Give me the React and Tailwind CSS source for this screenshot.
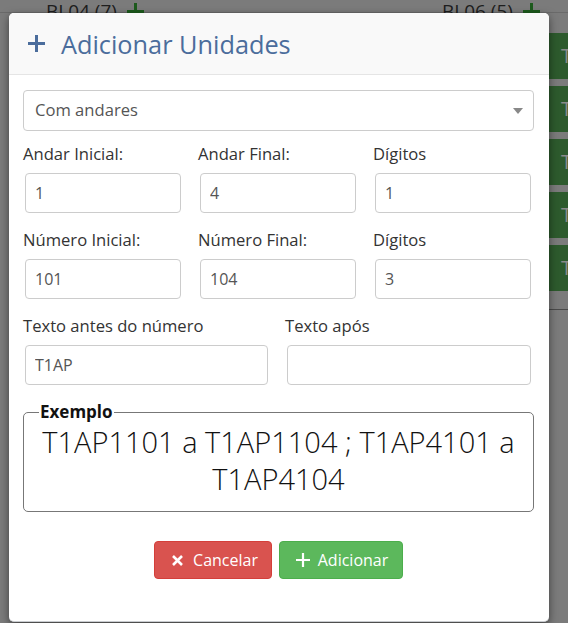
import React from "react";

const font = { fontFamily: '"Open Sans", "Noto Sans", sans-serif' };

function Field({ label, value, inputClass }) {
  return (
    <div className="flex flex-col">
      <label className="text-[16.6px] leading-[22px] text-[#333] h-[22px] whitespace-nowrap">{label}</label>
      <input
        readOnly
        value={value}
        className={`mt-[8px] ml-[2px] h-[40px] rounded-[4px] border border-[#ccc] bg-white pl-[9px] text-[16px] text-[#555] outline-none ${inputClass}`}
      />
    </div>
  );
}

export default function App() {
  return (
    <div className="relative w-[568px] h-[623px] overflow-hidden bg-[#7b7b7b]" style={font}>
      {/* page behind overlay */}
      <div className="flex flex-col">
        <div className="h-[13px] flex items-end border-b border-[#6a6a6a]">
          <div className="flex w-full">
            <div className="ml-[46px] flex items-center gap-[10px] -mb-[10px]">
              <span className="text-[19px] leading-[22px] text-[#1e1e1e]">BL04 (7)</span>
              <svg width="17" height="17" viewBox="0 0 17 17">
                <path d="M8.5 0v17M0 8.5h17" stroke="#1d5a1d" strokeWidth="3" />
              </svg>
            </div>
            <div className="ml-[298px] flex items-center gap-[10px] -mb-[10px]">
              <span className="text-[19px] leading-[22px] text-[#1e1e1e]">BL06 (5)</span>
              <svg width="17" height="17" viewBox="0 0 17 17">
                <path d="M8.5 0v17M0 8.5h17" stroke="#1d5a1d" strokeWidth="3" />
              </svg>
            </div>
          </div>
        </div>
        <div className="ml-[549px] mt-[20px] flex flex-col gap-[7px] w-[40px]">
          {[0, 1, 2, 3, 4].map((i) => (
            <div key={i} className="h-[46px] bg-[#2d5a2d] flex items-center pl-[12px] text-[20px] text-[#8a8a8a]">
              T
            </div>
          ))}
          <div className="h-[12px] border-b border-[#4a4a4a]" />
        </div>
      </div>

      {/* modal */}
      <div className="absolute left-[9px] top-[13px] w-[540px] h-[609px] bg-white rounded-[5px] border-b border-[#c9ccd0] shadow-[0_3px_9px_rgba(0,0,0,0.5)] flex flex-col">
        <div className="h-[62px] bg-[#f9f9f9] border-b border-[#e5e5e5] rounded-t-[5px] flex items-center pl-[19px] gap-[16px]">
          <svg width="17" height="17" viewBox="0 0 17 17">
            <path d="M8.5 0v17M0 8.5h17" stroke="#4b6d9c" strokeWidth="3" />
          </svg>
          <span className="text-[25.3px] leading-[30px] text-[#4b6d9c]">Adicionar Unidades</span>
        </div>

        <div className="pl-[14px] pr-[15px] pt-[15px] flex flex-col">
          <div className="h-[41px] rounded-[4px] border border-[#ccc] flex items-center justify-between pl-[11px] pr-[10px]">
            <span className="text-[16.6px] text-[#555]">Com andares</span>
            <svg width="10" height="6" viewBox="0 0 10 6">
              <path d="M0 0h10L5 6z" fill="#888" />
            </svg>
          </div>

          <div className="mt-[12px] grid grid-cols-[175px_175px_160px]">
            <Field label="Andar Inicial:" value="1" inputClass="w-[156px]" />
            <Field label="Andar Final:" value="4" inputClass="w-[156px]" />
            <Field label="Dígitos" value="1" inputClass="w-[156px]" />
          </div>

          <div className="mt-[16px] grid grid-cols-[175px_175px_160px]">
            <Field label="Número Inicial:" value="101" inputClass="w-[156px]" />
            <Field label="Número Final:" value="104" inputClass="w-[156px]" />
            <Field label="Dígitos" value="3" inputClass="w-[156px]" />
          </div>

          <div className="mt-[16px] grid grid-cols-[262px_248px]">
            <Field label="Texto antes do número" value="T1AP" inputClass="w-[243px]" />
            <Field label="Texto após" value="" inputClass="w-[244px]" />
          </div>

          <fieldset className="mt-[18px] border border-[#777] rounded-[5px] px-[10px] pb-[14px] min-w-0">
            <legend className="ml-[5px] px-[1px] text-[17px] leading-[18px] font-bold text-[#111]">Exemplo</legend>
            <div className="text-center text-[29px] leading-[37px] font-light text-[#111] mt-[2px]">
              T1AP1101 a T1AP1104 ; T1AP4101 a T1AP4104
            </div>
          </fieldset>

          <div className="mt-[29px] flex justify-center gap-[7px]">
            <button className="h-[38px] w-[118px] rounded-[4px] bg-[#d9534f] border border-[#d43f3a] text-white text-[16px] flex items-center justify-center gap-[10px] pl-[4px]">
              <svg width="11" height="11" viewBox="0 0 11 11">
                <path d="M1 1l9 9M10 1l-9 9" stroke="white" strokeWidth="2.6" />
              </svg>
              Cancelar
            </button>
            <button className="h-[38px] w-[124px] rounded-[4px] bg-[#5cb85c] border border-[#4cae4c] text-white text-[16px] flex items-center justify-center gap-[8px] pl-[2px]">
              <svg width="14" height="14" viewBox="0 0 14 14">
                <path d="M7 0v14M0 7h14" stroke="white" strokeWidth="2.2" />
              </svg>
              Adicionar
            </button>
          </div>
        </div>
      </div>
    </div>
  );
}
